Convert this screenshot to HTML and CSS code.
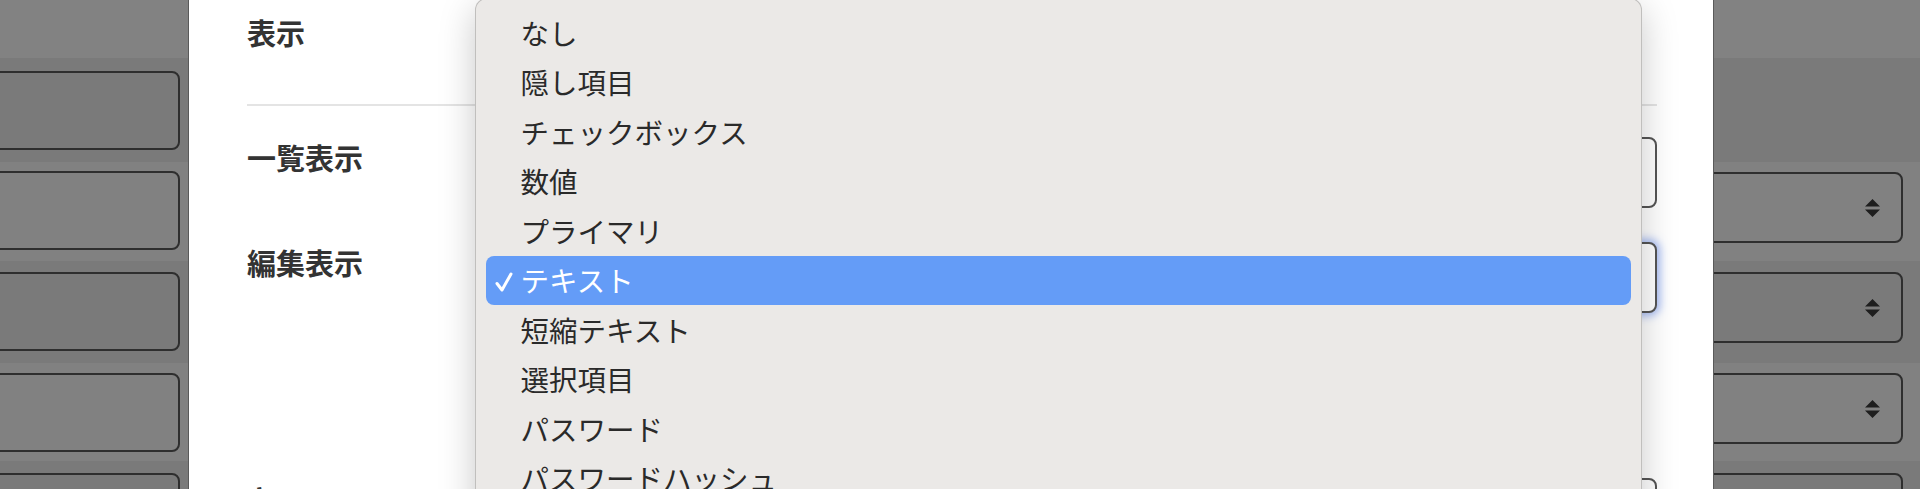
FILE: index.html
```html
<!DOCTYPE html>
<html lang="ja">
<head>
<meta charset="utf-8">
<title>表示設定</title>
<link rel="stylesheet" href="styles.css">
</head>
<body>
<div class="page">
  <div class="thead"></div>
  <div class="row dark r1">
    <div class="cell-box"></div>
  </div>
  <div class="row light r2">
    <div class="cell-box"></div>
    <div class="cell-select"><svg class="updown" viewBox="0 0 15 18" width="15" height="18"><path d="M0 7.5 L7.5 0 L15 7.5 Z M0 10.5 L7.5 18 L15 10.5 Z" fill="#1e1e1e"/></svg></div>
  </div>
  <div class="row dark r3">
    <div class="cell-box"></div>
    <div class="cell-select"><svg class="updown" viewBox="0 0 15 18" width="15" height="18"><path d="M0 7.5 L7.5 0 L15 7.5 Z M0 10.5 L7.5 18 L15 10.5 Z" fill="#1e1e1e"/></svg></div>
  </div>
  <div class="row light r4">
    <div class="cell-box"></div>
    <div class="cell-select"><svg class="updown" viewBox="0 0 15 18" width="15" height="18"><path d="M0 7.5 L7.5 0 L15 7.5 Z M0 10.5 L7.5 18 L15 10.5 Z" fill="#1e1e1e"/></svg></div>
  </div>
  <div class="row dark r5">
    <div class="cell-box"></div>
    <div class="cell-select"><svg class="updown" viewBox="0 0 15 18" width="15" height="18"><path d="M0 7.5 L7.5 0 L15 7.5 Z M0 10.5 L7.5 18 L15 10.5 Z" fill="#1e1e1e"/></svg></div>
  </div>
</div>

<div class="modal">
  <div class="modal-head">
    <div class="label">表示</div>
  </div>
  <div class="field f1">
    <div class="label">一覧表示</div>
    <div class="input"></div>
  </div>
  <div class="field f2">
    <div class="label">編集表示</div>
    <div class="input focused"></div>
  </div>
  <div class="field f3">
    <div class="label">キー</div>
    <div class="input"></div>
  </div>
</div>

<div class="menu">
  <div class="item"><span class="check"></span>なし</div>
  <div class="item"><span class="check"></span>隠し項目</div>
  <div class="item"><span class="check"></span>チェックボックス</div>
  <div class="item"><span class="check"></span>数値</div>
  <div class="item"><span class="check"></span>プライマリ</div>
  <div class="item selected"><span class="check"><svg viewBox="0 0 18 20" width="18" height="20"><path d="M2 11.5 L7 18 L16 2" fill="none" stroke="#fff" stroke-width="3" stroke-linecap="round" stroke-linejoin="round"/></svg></span>テキスト</div>
  <div class="item"><span class="check"></span>短縮テキスト</div>
  <div class="item"><span class="check"></span>選択項目</div>
  <div class="item"><span class="check"></span>パスワード</div>
  <div class="item"><span class="check"></span>パスワードハッシュ</div>
</div>
</body>
</html>
```

FILE: styles.css
```css
html, body {
  margin: 0;
  padding: 0;
  height: 489px;
  overflow: hidden;
  font-family: "Noto Sans CJK JP", "Noto Sans", sans-serif;
}

body {
  background: #7b7b7b;
  position: relative;
}

.page {
  display: flex;
  flex-direction: column;
}

.thead {
  height: 58px;
  flex: none;
  background: #828282;
}

.row {
  display: flex;
  flex: none;
  align-items: flex-start;
  justify-content: space-between;
  box-sizing: border-box;
}

.dark { background: #7a7a7a; }
.light { background: #818181; }

.r1 { height: 104px; padding-top: 13px; }
.r2 { height: 99px; padding-top: 9px; }
.r3 { height: 102px; padding-top: 11px; }
.r4 { height: 98px; padding-top: 10px; }
.r5 { height: 120px; padding-top: 12px; }

.cell-box {
  margin-left: -14px;
  width: 194px;
  height: 79px;
  flex: none;
  box-sizing: border-box;
  border: 2px solid #2e2e2e;
  border-radius: 8px;
}

.cell-select {
  width: 320px;
  height: 71px;
  flex: none;
  margin-top: 1px;
  margin-right: 17px;
  box-sizing: border-box;
  border: 2px solid #2e2e2e;
  border-radius: 8px;
  display: flex;
  align-items: center;
  justify-content: flex-end;
  padding-right: 21px;
}

.r3 .cell-select, .r4 .cell-select, .r5 .cell-select { margin-top: 0; }

.updown { display: block; }

/* modal */
.modal {
  position: absolute;
  top: 0;
  left: 188px;
  width: 1526px;
  height: 489px;
  overflow: hidden;
  box-sizing: border-box;
  background: #fff;
  border-left: 1px solid #5a5a5a;
  border-right: 1px solid #5a5a5a;
  padding: 0 56px 0 58px;
  display: flex;
  flex-direction: column;
}

.label {
  font-size: 29px;
  font-weight: 700;
  line-height: 40px;
  color: #333;
  width: 300px;
  flex: none;
  margin-top: 0;
}

.modal-head {
  height: 106px;
  flex: none;
  box-sizing: border-box;
  padding-top: 12px;
  border-bottom: 2px solid #e4e4e4;
}

.field {
  display: flex;
  flex: none;
  align-items: flex-start;
}

.f1 { margin-top: 31px; }
.f2 { margin-top: 34px; }
.f3 { margin-top: 165px; }

.input {
  flex: 1;
  height: 71px;
  box-sizing: border-box;
  border: 2px solid #555;
  border-radius: 8px;
  background: #fff;
}

.input.focused {
  box-shadow: 0 0 8px 3px rgba(90, 130, 235, 0.55);
}

/* dropdown menu */
.menu {
  position: absolute;
  top: -2px;
  left: 475px;
  width: 1167px;
  height: 560px;
  box-sizing: border-box;
  background: #ebe9e7;
  border: 1px solid rgba(0, 0, 0, 0.18);
  border-radius: 12px;
  box-shadow: 0 10px 36px rgba(0, 0, 0, 0.22);
  padding-top: 9px;
}

.item {
  display: flex;
  align-items: center;
  height: 49.5px;
  margin: 0 10px;
  border-radius: 8px;
  font-size: 28.5px;
  line-height: 48px;
  color: #2a2a2a;
  white-space: nowrap;
}

.item.selected {
  background: #649cf7;
  color: #fff;
}

.check {
  width: 34.5px;
  flex: none;
  box-sizing: border-box;
  padding-left: 9px;
  display: flex;
  align-items: center;
  padding-top: 4px;
}

.check svg { display: block; }
```
